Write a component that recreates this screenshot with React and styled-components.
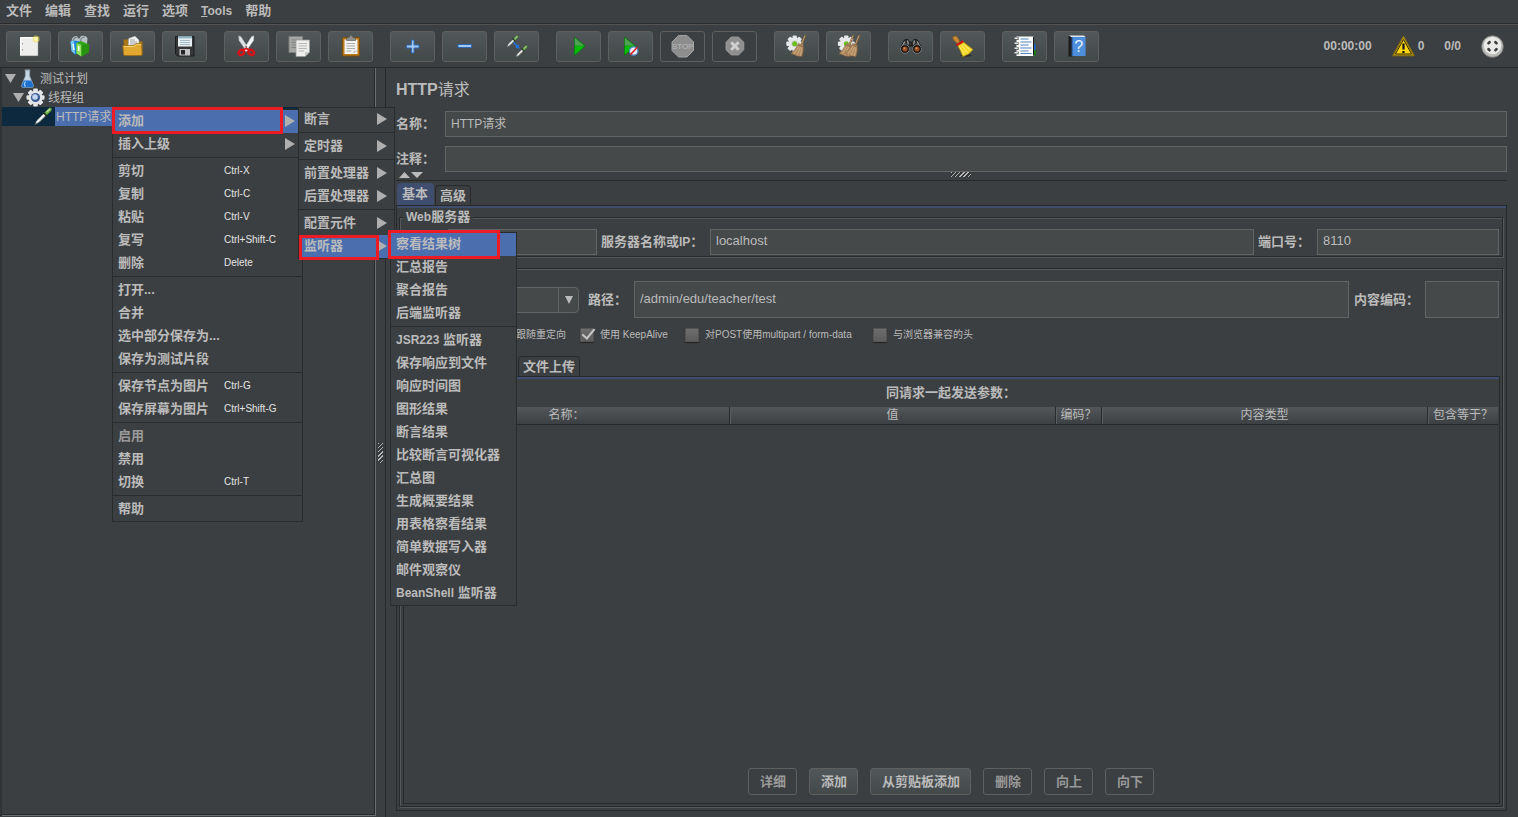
import { useState } from "react";
import { createGlobalStyle, css, styled } from "styled-components";

const Latin = styled.span`
  font-size: 12px;
`;

const LISTENERS = [
  { label: "察看结果树", hot: true, marker: { x: -3, y: -3, w: 112, h: 29 } },
  { label: "汇总报告" },
  { label: "聚合报告" },
  { label: "后端监听器" },
  null,
  { label: <><Latin>JSR223</Latin> 监听器</> },
  { label: "保存响应到文件" },
  { label: "响应时间图" },
  { label: "图形结果" },
  { label: "断言结果" },
  { label: "比较断言可视化器" },
  { label: "汇总图" },
  { label: "生成概要结果" },
  { label: "用表格察看结果" },
  { label: "简单数据写入器" },
  { label: "邮件观察仪" },
  { label: <><Latin>BeanShell</Latin> 监听器</> },
];

const ADD_MENU = [
  { label: "断言", arrow: true },
  null,
  { label: "定时器", arrow: true },
  null,
  { label: "前置处理器", arrow: true },
  { label: "后置处理器", arrow: true },
  null,
  { label: "配置元件", arrow: true },
  {
    label: "监听器",
    arrow: true,
    hot: true,
    marker: { x: 0, y: 0, w: 80, h: 25 },
    children: LISTENERS,
    childLeft: 91,
    childWidth: 127,
  },
];

const CONTEXT_MENU = [
  {
    label: "添加",
    arrow: true,
    hot: true,
    marker: { x: -1, y: -3, w: 171, h: 27 },
    children: ADD_MENU,
    childLeft: 185,
    childWidth: 97,
  },
  { label: "插入上级", arrow: true },
  null,
  { label: "剪切", keys: "Ctrl-X" },
  { label: "复制", keys: "Ctrl-C" },
  { label: "粘贴", keys: "Ctrl-V" },
  { label: "复写", keys: "Ctrl+Shift-C" },
  { label: "删除", keys: "Delete" },
  null,
  { label: "打开..." },
  { label: "合并" },
  { label: "选中部分保存为..." },
  { label: "保存为测试片段" },
  null,
  { label: "保存节点为图片", keys: "Ctrl-G" },
  { label: "保存屏幕为图片", keys: "Ctrl+Shift-G" },
  null,
  { label: "启用", disabled: true },
  { label: "禁用" },
  { label: "切换", keys: "Ctrl-T" },
  null,
  { label: "帮助" },
];

function Menu({ items, left, top, width }) {
  return (
    <MenuBox $left={left} $top={top} $width={width}>
      {items.map((item, i) =>
        item ? (
          <MenuRow key={i} $marker={item.marker}>
            <MenuButton type="button" $hot={item.hot} disabled={item.disabled}>
              <MenuLabel $keyed={item.keys}>{item.label}</MenuLabel>
              {item.keys && <Keys>{item.keys}</Keys>}
              {item.arrow && (
                <MenuArrow viewBox="0 0 10 12">
                  <path d="M0 0L10 6L0 12z" fill="#afafaf" />
                </MenuArrow>
              )}
            </MenuButton>
            {item.children && (
              <Menu
                items={item.children}
                left={item.childLeft}
                top={-3}
                width={item.childWidth}
              />
            )}
          </MenuRow>
        ) : (
          <MenuSeparator key={i} />
        ),
      )}
    </MenuBox>
  );
}

function Pipette({ x = 0, y = 0, scale = 1 }) {
  return (
    <g transform={`translate(${x} ${y}) scale(${scale})`}>
      <path d="M1.5 17.5L4 13L11 6L13 8L6 15z" fill="#d5d9d6" stroke="#6f7573" strokeWidth=".7" />
      <path d="M3 15.5L11 7.5" stroke="#fff" strokeWidth="1.4" />
      <path d="M9.5 5L14 9.5" stroke="#1f2a1f" strokeWidth="1.8" />
      <path d="M11.2 5.6L15.4 1.2Q17.6 .2 18.2 2Q18.4 3 17.6 3.8L13.4 8z" fill="#6fae50" stroke="#3f7a2c" strokeWidth=".6" />
      <path d="M13 5L16.5 2" stroke="#c0e8a4" strokeWidth="1.1" />
    </g>
  );
}

function Cog({ cx, cy, r, fill = "#e6e8ea" }) {
  return (
    <g>
      {[0, 45, 90, 135].map((a) => (
        <rect
          key={a}
          x={cx - r * 0.26}
          y={cy - r}
          width={r * 0.52}
          height={r * 2}
          rx="1"
          fill={fill}
          transform={`rotate(${a} ${cx} ${cy})`}
        />
      ))}
      <circle cx={cx} cy={cy} r={r * 0.76} fill={fill} />
    </g>
  );
}

function Broom({ x = 0 }) {
  return (
    <g transform={`translate(${x} 0)`}>
      <path d="M20.2 .5L16.4 10" stroke="#7b5a3a" strokeWidth="2" />
      <path d="M20 .5L16.4 9.5" stroke="#c79c6c" strokeWidth="1" />
      <path d="M13.5 8.5L18.3 10.2Q18.8 16 17 21.5L12.5 21L6 18.6Q10.8 14.5 13.5 8.5z" fill="#b18a60" stroke="#80603f" strokeWidth=".5" />
      <path d="M14.5 10.5L9 19M16 11L12 20.5M17.3 11.5L15.2 21" stroke="#dbbb92" strokeWidth=".6" />
      <path d="M13.2 10.2L18.2 12" stroke="#7d5b38" strokeWidth=".8" />
    </g>
  );
}

const NewIcon = () => (
  <Glyph viewBox="0 0 23 23">
    <path d="M3.5 2.5h17v18h-17z" fill="#eeeeec" stroke="#fff" />
    <path d="M3.5 20.7h17.5V3" fill="none" stroke="#8a8c89" strokeWidth=".6" />
    <path d="M5.5 8v1.5M5.5 14v1.5" stroke="#9a9a9a" />
    <circle cx="19" cy="4" r="3.6" fill="#f4e04c" opacity=".55" />
    <circle cx="19" cy="4" r="2" fill="#fff8b0" />
  </Glyph>
);

const TemplatesIcon = () => (
  <Glyph viewBox="0 0 23 23">
    <path d="M2.5 6Q3 1 8 1L10 4L12 1Q17 0 18.5 3L18 9L8 10z" fill="#b9c0c4" />
    <path d="M4 6Q5 2 9 2M11.5 6Q12 2 16 2" fill="none" stroke="#75808a" strokeWidth="1.2" />
    <path d="M1.5 6.5L5 5.5L11 6.5V18L5.5 19.5L2.5 16z" fill="#1a82d6" />
    <path d="M1.5 6.5L5 5.5L6 19L2.5 16z" fill="#7cc7f5" />
    <path d="M7.5 8L12 6L20 9.5V17L12.5 21.5L7.5 18.5z" fill="#31a317" />
    <path d="M7.5 8L12.5 10V21.5L7.5 18.5z" fill="#8fe25f" />
    <path d="M12.5 10L20 9.5V17L12.5 21.5z" fill="#27920f" />
    <path d="M4 9L5 15M9.8 11v5" stroke="#fff" strokeWidth="1.3" />
  </Glyph>
);

const OpenIcon = () => (
  <Glyph viewBox="0 0 23 23">
    <path d="M2.5 4.5h6l2 2h11v13h-18z" fill="#a97612" />
    <path d="M7.5 3.5L14 1L18 5V13H7z" fill="#f2f2f0" stroke="#8f8f8c" strokeWidth=".6" />
    <path d="M9 5h5M9 7h7M9 9h7" stroke="#8b9095" strokeWidth=".8" />
    <path d="M1.8 10.5H13L15 8.5H20.5L21 19.5Q21 20.5 20 20.5H4Q2.8 20.5 2.6 19.5z" fill="#e0a82e" stroke="#9b6c10" strokeWidth=".7" />
    <path d="M2.8 11.5H13.5L15.5 9.5H19.8" fill="none" stroke="#f7d57e" strokeWidth=".9" />
  </Glyph>
);

const SaveIcon = () => (
  <Glyph viewBox="0 0 23 23">
    <path d="M2.5 1.5h18.5V21H4.5L2.5 19z" fill="#343637" stroke="#1c1d1e" />
    <path d="M5 1.5h14v10H5z" fill="#e8eff3" />
    <path d="M5 1.5h14v2H5z" fill="#8fb8c9" />
    <path d="M7 5.5h10M7 7.5h10M7 9.5h10" stroke="#9fb4c0" strokeWidth=".9" />
    <path d="M6.5 14H17v6.5H6.5z" fill="#bfc1c2" />
    <path d="M8 15h4v4.5H8z" fill="#242526" />
  </Glyph>
);

const CutIcon = () => (
  <Glyph viewBox="0 0 23 23">
    <path d="M3.6 .8L6 1.6L14.5 15L11.5 16.5L4 5.5z" fill="#dfe3e6" stroke="#8f9598" strokeWidth=".5" />
    <path d="M19 .8L16.6 1.6L8.1 15L11 16.5L18.6 5.5z" fill="#f6f7f8" stroke="#9ba0a3" strokeWidth=".5" />
    <circle cx="11.3" cy="12" r=".9" fill="#666" />
    <ellipse cx="6.4" cy="17.4" rx="3" ry="2.3" fill="none" stroke="#dc1015" strokeWidth="2.3" transform="rotate(-35 6.4 17.4)" />
    <ellipse cx="16.2" cy="17.4" rx="3" ry="2.3" fill="none" stroke="#dc1015" strokeWidth="2.3" transform="rotate(35 16.2 17.4)" />
    <path d="M8.4 14.8L11.3 13.4L14.2 14.8" fill="none" stroke="#dc1015" strokeWidth="1.8" />
  </Glyph>
);

const CopyIcon = () => (
  <Glyph viewBox="0 0 23 23">
    <path d="M2 1.5H15.5V17.5H2z" fill="#a5a7a5" stroke="#7e807e" />
    <path d="M4.5 5h8M4.5 7.5h8M4.5 10h6M4.5 12.5h6" stroke="#7f827f" />
    <path d="M9 5H22.5V17L18 21.5H9z" fill="#eeeeec" stroke="#9b9d9a" strokeWidth=".8" />
    <path d="M11.5 8.5h8.5M11.5 11h8.5M11.5 13.5h8.5M11.5 16h5.5" stroke="#b6b8b5" />
    <path d="M18 21.5V17h4.5z" fill="#c9cbc8" />
  </Glyph>
);

const PasteIcon = () => (
  <Glyph viewBox="0 0 23 23">
    <rect x="3.5" y="2.5" width="17" height="18.5" rx="1" fill="#b97a1a" stroke="#7d4f0b" />
    <path d="M5.5 4.5H18.5V19H5.5z" fill="#f3f3f1" />
    <path d="M7.5 8.5h8.5M7.5 11h8.5M7.5 13.5h8.5M7.5 16h5" stroke="#a9aba8" />
    <path d="M14.5 19V15.5H18.5z" fill="#c6c8c5" />
    <path d="M7.5 5.5V3.2L10 2.6Q10.4 .6 12 .6T14 2.6L16.5 3.2V5.5z" fill="#8e908d" stroke="#555753" strokeWidth=".6" />
  </Glyph>
);

const PlusIcon = () => (
  <Glyph viewBox="0 0 23 23">
    <path d="M10.5 5h2.5v5h5v3h-5v5h-2.500v-5h-5v-3h5z" fill="#a4c8f0" stroke="#2c68b4" strokeWidth="1" />
  </Glyph>
);

const MinusIcon = () => (
  <Glyph viewBox="0 0 23 23">
    <path d="M5 9.5h13.5v3H5z" fill="#a4c8f0" stroke="#2c68b4" strokeWidth="1" />
  </Glyph>
);

const ToggleIcon = () => (
  <Glyph viewBox="0 0 23 23">
    <Pipette x={1} y={0} scale={0.68} />
    <Pipette x={10} y={10} scale={0.68} />
    <path d="M8.5 7.5L12.5 11.5" stroke="#1c74e8" strokeWidth="1.4" />
    <path d="M14.5 13.8L10 12.6L13.6 9.2z" fill="#1c74e8" />
  </Glyph>
);

const PlayShape = ({ x }) => (
  <g transform={`translate(${x} 0)`}>
    <path d="M.5 2L11.5 11L.5 20.5z" fill="#12a312" stroke="#0a6d12" strokeWidth=".8" />
    <path d="M.8 3L10 10.5H.8z" fill="#4f9f54" />
    <path d="M.8 11.5H10L.8 19.5z" fill="#08bd08" />
  </g>
);

const StartIcon = () => (
  <Glyph viewBox="0 0 23 23">
    <PlayShape x={7} />
  </Glyph>
);

const StartNoTimersIcon = () => (
  <Glyph viewBox="0 0 23 23">
    <PlayShape x={5} />
    <circle cx="14.7" cy="16" r="4.2" fill="#e8f1fa" stroke="#4f86c6" strokeWidth="1.2" />
    <path d="M11.4 19.6L18.4 12.2" stroke="#e02222" strokeWidth="1.6" />
  </Glyph>
);

const StopIcon = () => (
  <Glyph viewBox="0 0 23 23">
    <path d="M7.5 .5H16L22.5 7V15.5L16 22H7.5L1 15.5V7z" fill="#8d8d8d" stroke="#a3a3a3" />
    <text x="11.8" y="14.3" fontSize="8" textAnchor="middle" fontFamily="Liberation Sans, sans-serif" fill="#b9b9b9">
      STOP
    </text>
  </Glyph>
);

const ShutdownIcon = () => (
  <Glyph viewBox="0 0 23 23">
    <path d="M8.2 2H15.5L20.8 7.3V14.8L15.5 20H8.2L3 14.8V7.3z" fill="#8f8f8f" stroke="#a0a0a0" strokeWidth=".8" />
    <path d="M8.2 7.3L15.6 14.7M15.6 7.3L8.2 14.7" stroke="#cfcfcf" strokeWidth="3" />
  </Glyph>
);

const ClearIcon = () => (
  <Glyph viewBox="0 0 23 23">
    <Cog cx={9.7} cy={8.8} r={8.4} />
    <circle cx="9.7" cy="8.8" r="3.2" fill="#c9cfc4" />
    <circle cx="9.7" cy="8.8" r="2.5" fill="#6bbf1f" />
    <Broom />
  </Glyph>
);

const ClearAllIcon = () => (
  <Glyph viewBox="0 0 23 23">
    <Cog cx={9.3} cy={8.8} r={8.4} />
    <circle cx="9.3" cy="8.8" r="2.5" fill="#6bbf1f" />
    <Broom x={-4} />
    <Broom x={2} />
  </Glyph>
);

const SearchIcon = () => (
  <Glyph viewBox="0 0 23 23">
    <path d="M5 5.5Q6.5 3.6 9 4.5L10.5 7H13.5L15 4.5Q17.5 3.6 19 5.5L22.5 13L14 15V11H10V15L1.5 13z" fill="#2b2b2b" stroke="#0e0e0e" strokeWidth=".7" />
    <path d="M5.8 6.5L3.5 11M8.6 5.5L9.3 9.5M18.2 6.5L20.5 11M15.4 5.5L14.7 9.5" stroke="#a3a6a8" strokeWidth="1.3" />
    <circle cx="6" cy="14" r="4.4" fill="#111" stroke="#8a8a8a" strokeWidth=".8" />
    <circle cx="18" cy="14" r="4.4" fill="#111" stroke="#8a8a8a" strokeWidth=".8" />
    <circle cx="6" cy="14" r="2.6" fill="#9a4f22" />
    <circle cx="18" cy="14" r="2.6" fill="#9a4f22" />
    <circle cx="5.4" cy="13.2" r="1" fill="#d9895a" />
    <circle cx="17.4" cy="13.2" r="1" fill="#d9895a" />
  </Glyph>
);

const ResetSearchIcon = () => (
  <Glyph viewBox="0 0 23 23">
    <ellipse cx="15" cy="20.5" rx="6" ry="1.2" fill="#2c2f30" />
    <path d="M2 2.2Q3.5 .2 6 1.5L9 6.5L6.5 8.5Q1 4.5 2 2.2z" fill="#c98a34" stroke="#85551a" strokeWidth=".7" />
    <path d="M6 9.5L11.5 6.2Q16 10 22 14.5Q18 20 11.8 21.5Q9.5 15 6 9.5z" fill="#f2d626" stroke="#a88a0a" strokeWidth=".7" />
    <path d="M8.5 11.5L13.5 19.5M10.8 10.5L17 18.5M12.5 9.5L19.8 15.5" stroke="#fff27a" strokeWidth="1" />
    <path d="M5.6 10.3L12.2 6.2" stroke="#cc1414" strokeWidth="2.2" />
  </Glyph>
);

const FunctionIcon = () => (
  <Glyph viewBox="0 0 23 23">
    <path d="M20 9h2.6v6H20z" fill="#1d63c4" />
    <path d="M20 15h2.6v5.5H20z" fill="#128a12" />
    <path d="M3.5 1.5h17V21h-17z" fill="#fafafa" />
    <path d="M20.5 2v18.5" stroke="#17181a" />
    <path d="M7.5 4h8M7.5 7h11M7.5 10h8M7.5 13h11M7.5 16h8M7.5 18.5h11" stroke="#5585bf" strokeWidth="1.1" />
    <path d="M3.5 3.5h2M3.5 8.5h2M3.5 13.5h2M3.5 18h2" stroke="#222" strokeWidth="2.6" />
    <path d="M1.5 3.2h3.4M1.5 8.2h3.4M1.5 13.2h3.4M1.5 17.8h3.4" stroke="#e4e4e4" strokeWidth="1.5" />
  </Glyph>
);

const HelpIcon = () => (
  <Glyph viewBox="0 0 23 23">
    <path d="M3.5 1H7.5V21.5H3.5z" fill="#1b1c1e" />
    <path d="M4 .6H19L20.5 2H6z" fill="#dfe3e8" />
    <path d="M6.8 2H20.6V21H6.8z" fill="#4d8fdc" />
    <path d="M7.4 2v19" stroke="#2f68ad" />
    <text x="13.8" y="16.8" fontSize="16" textAnchor="middle" fontFamily="Liberation Sans, sans-serif" fill="#eaf3ff">
      ?
    </text>
  </Glyph>
);

const TOOLBAR = [
  [
    { name: "新建", icon: NewIcon },
    { name: "模板", icon: TemplatesIcon },
    { name: "打开", icon: OpenIcon },
    { name: "保存", icon: SaveIcon },
  ],
  [
    { name: "剪切", icon: CutIcon },
    { name: "复制", icon: CopyIcon },
    { name: "粘贴", icon: PasteIcon },
  ],
  [
    { name: "展开", icon: PlusIcon },
    { name: "折叠", icon: MinusIcon },
    { name: "切换", icon: ToggleIcon },
  ],
  [
    { name: "启动", icon: StartIcon },
    { name: "不停顿启动", icon: StartNoTimersIcon },
    { name: "停止", icon: StopIcon, disabled: true },
    { name: "关闭", icon: ShutdownIcon, disabled: true },
  ],
  [
    { name: "清除", icon: ClearIcon },
    { name: "清除全部", icon: ClearAllIcon },
  ],
  [
    { name: "查找", icon: SearchIcon },
    { name: "重置查找", icon: ResetSearchIcon },
  ],
  [
    { name: "函数助手", icon: FunctionIcon },
    { name: "帮助", icon: HelpIcon },
  ],
];

function Toolbar() {
  return (
    <ToolbarBox>
      {TOOLBAR.map((group, i) => (
        <ToolGroup key={i}>
          {group.map(({ name, icon: Icon, disabled }) => (
            <ToolButton key={name} type="button" aria-label={name} disabled={disabled}>
              <Icon />
            </ToolButton>
          ))}
        </ToolGroup>
      ))}
      <Status>
        <StatusText>00:00:00</StatusText>
        <Warning>
          <Glyph viewBox="0 0 23 23">
            <path d="M11.5 1.5L22 20.5H1z" fill="#f4c90c" stroke="#8b7108" strokeWidth="1.4" strokeLinejoin="round" />
            <path d="M11.5 4.5L19.6 19H3.4z" fill="#fbd50f" stroke="#29230a" strokeWidth="1" />
            <path d="M11.5 8.5v6" stroke="#111" strokeWidth="2.2" />
            <path d="M11.5 16v2" stroke="#111" strokeWidth="2.2" />
          </Glyph>
          <StatusText>0</StatusText>
        </Warning>
        <StatusText>0/0</StatusText>
        <Glyph viewBox="0 0 23 23">
          <circle cx="11.5" cy="11.5" r="10.8" fill="#b9b9b7" stroke="#777" strokeWidth=".8" />
          <circle cx="11.5" cy="10.5" r="8.8" fill="#e9e9e7" />
          {[45, 135, 225, 315].map((a) => (
            <rect key={a} x="9.5" y="5" width="4" height="2.6" rx="1" fill="#3c3f41" transform={`rotate(${a} 11.5 11.2)`} />
          ))}
        </Glyph>
      </Status>
    </ToolbarBox>
  );
}

function Tree({ onContextMenu }) {
  return (
    <TreeBox onContextMenu={onContextMenu}>
      <TreeRow $depth={0}>
        <Twisty viewBox="0 0 11 9">
          <path d="M0 0H11L5.5 9z" fill="#afafaf" />
        </Twisty>
        <TreeIcon viewBox="0 0 20 19">
          <path d="M7.8 1h4.4v6L16 16.5Q16.3 18.5 14.5 18.5H5.5Q3.7 18.5 4 16.5L7.8 7z" fill="#c6d6e2" stroke="#7f98ab" strokeWidth=".6" />
          <path d="M6.5 11.5H13.6L15.7 16.5Q15.9 18.2 14.5 18.2H5.5Q4.1 18.2 4.3 16.5z" fill="#1d6fd0" />
          <path d="M8 12.5Q6 16 8 17.5" fill="none" stroke="#9fd0ff" strokeWidth="1.2" />
          <path d="M7.2 1.2h5.6" stroke="#9aa5ad" strokeWidth="1.2" />
        </TreeIcon>
        <TreeLabel>测试计划</TreeLabel>
      </TreeRow>
      <TreeRow $depth={1}>
        <Twisty viewBox="0 0 11 9">
          <path d="M0 0H11L5.5 9z" fill="#afafaf" />
        </Twisty>
        <TreeIcon viewBox="0 0 20 19">
          <Cog cx={10} cy={9.5} r={9} fill="#e3e5e8" />
          <circle cx="10" cy="9.5" r="4.6" fill="#3c5c96" />
          <circle cx="9.5" cy="9" r="2.8" fill="#c4d6ef" />
        </TreeIcon>
        <TreeLabel>线程组</TreeLabel>
      </TreeRow>
      <TreeRow $depth={2} $selected>
        <Twisty viewBox="0 0 11 9" />
        <TreeIcon viewBox="0 0 20 19">
          <Pipette />
        </TreeIcon>
        <TreeLabel $selected>HTTP请求</TreeLabel>
      </TreeRow>
    </TreeBox>
  );
}

function ParameterTable() {
  return (
    <ParamPanel>
      <ParamTitle>同请求一起发送参数：</ParamTitle>
      <Table>
        <colgroup>
          <col />
          <col />
          <Col $width={46} />
          <col />
          <Col $width={70} />
        </colgroup>
        <thead>
          <tr>
            <Th>名称：</Th>
            <Th>值</Th>
            <Th>编码？</Th>
            <Th>内容类型</Th>
            <Th>包含等于？</Th>
          </tr>
        </thead>
        <tbody />
      </Table>
      <ButtonRow>
        <PushButton type="button" disabled>详细</PushButton>
        <PushButton type="button">添加</PushButton>
        <PushButton type="button">从剪贴板添加</PushButton>
        <PushButton type="button" disabled>删除</PushButton>
        <PushButton type="button" disabled>向上</PushButton>
        <PushButton type="button" disabled>向下</PushButton>
      </ButtonRow>
    </ParamPanel>
  );
}

function RequestEditor() {
  return (
    <Editor>
      <Title>
        HTTP<span>请求</span>
      </Title>
      <NameRow>
        <Label htmlFor="name">名称：</Label>
        <Input id="name" defaultValue="HTTP请求" $small />
      </NameRow>
      <NameRow>
        <Label htmlFor="comment">注释：</Label>
        <Input id="comment" />
      </NameRow>
      <HorizontalSplit>
        <SplitArrows viewBox="0 0 24 6">
          <path d="M0 6L5.5 0L11 6zM12 0H24L18 6z" fill="#bbbbbb" />
        </SplitArrows>
        <Grip $w={20} $h={5} />
      </HorizontalSplit>
      <Tabs>
        <Tab type="button" $active>基本</Tab>
        <Tab type="button">高级</Tab>
      </Tabs>
      <TabPanel>
        <Group>
          <legend><Latin>Web</Latin>服务器</legend>
          <FieldRow>
            <ShortInput aria-label="协议" />
            <Label htmlFor="host" $w={113}>服务器名称或<Latin>IP</Latin>：</Label>
            <Input id="host" defaultValue="localhost" />
            <Label htmlFor="port" $w={63}>端口号：</Label>
            <PortInput id="port" defaultValue="8110" />
          </FieldRow>
        </Group>
        <RequestGroup>
          <PathRow>
            <Combo>
              <select aria-label="方法" />
              <svg viewBox="0 0 8 8" width="8" height="8">
                <path d="M0 0H8L4 8z" fill="#bbbbbb" />
              </svg>
            </Combo>
            <Label htmlFor="path" $w={55} $pad={9}>路径：</Label>
            <Input id="path" defaultValue="/admin/edu/teacher/test" $tall />
            <Label htmlFor="encoding" $w={76} $pad={5}>内容编码：</Label>
            <EncodingInput id="encoding" $tall />
          </PathRow>
          <Checks>
            <Check><input type="checkbox" />跟随重定向</Check>
            <Check><input type="checkbox" defaultChecked />使用 KeepAlive</Check>
            <Check><input type="checkbox" />对POST使用multipart / form-data</Check>
            <Check><input type="checkbox" />与浏览器兼容的头</Check>
          </Checks>
          <Tabs $inner>
            <Tab type="button">文件上传</Tab>
          </Tabs>
          <ParameterTable />
        </RequestGroup>
      </TabPanel>
    </Editor>
  );
}

function App() {
  const [contextMenu, setContextMenu] = useState({
    visible: true,
    x: 112,
    y: 109,
  });
  const handleContextMenu = (event) => {
    event.preventDefault();
    setContextMenu({ visible: true, x: event.clientX, y: event.clientY });
  };

  return (
    <Window>
      <GlobalStyle />
      <MenuBar>
        <MenuBarItem type="button">文件</MenuBarItem>
        <MenuBarItem type="button">编辑</MenuBarItem>
        <MenuBarItem type="button">查找</MenuBarItem>
        <MenuBarItem type="button">运行</MenuBarItem>
        <MenuBarItem type="button">选项</MenuBarItem>
        <MenuBarItem type="button">
          <Latin><u>T</u>ools</Latin>
        </MenuBarItem>
        <MenuBarItem type="button">帮助</MenuBarItem>
      </MenuBar>
      <Toolbar />
      <Main>
        <Tree onContextMenu={handleContextMenu} />
        <VerticalSplit>
          <Grip $w={5} $h={20} />
        </VerticalSplit>
        <RequestEditor />
      </Main>
      {contextMenu.visible && (
        <Menu items={CONTEXT_MENU} left={contextMenu.x} top={contextMenu.y} width={191} />
      )}
    </Window>
  );
}

const GlobalStyle = createGlobalStyle`
  *, *::before, *::after {
    box-sizing: border-box;
  }
  body {
    margin: 0;
    background-color: #3c3f41;
    color: #bbbbbb;
    font: 12px/16px "Liberation Sans", "Noto Sans CJK SC", sans-serif;
  }
  button, input, select {
    margin: 0;
    padding: 0;
    border: 0;
    background: none;
    color: inherit;
    font: inherit;
  }
`;

const Window = styled.div`
  position: relative;
  display: flex;
  flex-direction: column;
  min-height: 100vh;
  overflow: hidden;
`;

const MenuBar = styled.nav`
  display: flex;
  gap: 13px;
  height: 24px;
  padding: 0 6px 1px;
  border-bottom: 1px solid #2a2b2c;
`;
const MenuBarItem = styled.button`
  font-size: 13px;
  font-weight: 700;
  line-height: 20px;
`;

const ToolbarBox = styled.div`
  display: flex;
  align-items: center;
  gap: 17px;
  height: 44px;
  padding: 0 14px 0 6px;
  border-top: 1px solid #555351;
  border-bottom: 1px solid #28292b;
`;
const ToolGroup = styled.div`
  display: flex;
  gap: 7px;
`;
const ToolButton = styled.button`
  display: flex;
  align-items: center;
  justify-content: center;
  width: 45px;
  height: 31px;
  border: 1px solid #5e6060;
  border-radius: 3px;
  background: linear-gradient(#52585a, #434849);

  &:disabled {
    background: none;
  }
`;
const Glyph = styled.svg`
  width: 23px;
  height: 23px;
  flex-shrink: 0;
`;
const Status = styled.div`
  display: flex;
  align-items: center;
  gap: 20px;
  margin-left: auto;
`;
const StatusText = styled.span`
  font-weight: 700;
`;
const Warning = styled.div`
  display: flex;
  align-items: center;
  gap: 3px;
`;

const Main = styled.main`
  display: flex;
  flex: 1;
`;
const TreeBox = styled.aside`
  width: 374px;
  flex-shrink: 0;
  margin: 0 0 1px 2px;
  padding-top: 1px;
  border-right: 1px solid #6a6c6d;
  border-bottom: 1px solid #6a6c6d;
  box-shadow: inset -1px -1px 0 #28292b, -2px 0 0 #303335;
`;
const TreeRow = styled.div`
  display: flex;
  align-items: center;
  gap: 1px;
  height: 19px;
  margin-right: 1px;
  padding-left: ${({ $depth }) => 3 + $depth * 8}px;
  background-color: ${({ $selected }) => ($selected ? "#0d293e" : "transparent")};
`;
const Twisty = styled.svg`
  width: 11px;
  height: 9px;
`;
const TreeIcon = styled.svg`
  width: 21px;
  height: 19px;
`;
const TreeLabel = styled.span`
  padding: 1px 1px 0;
  line-height: 18px;
  background-color: ${({ $selected }) => ($selected ? "#4b6eaf" : "transparent")};
`;

const VerticalSplit = styled.div`
  display: flex;
  align-items: center;
  justify-content: center;
  width: 10px;
  flex-shrink: 0;
  padding-top: 20px;
  border-right: 1px solid #28292b;
`;
const Grip = styled.div`
  width: ${({ $w }) => $w}px;
  height: ${({ $h }) => $h}px;
  background: repeating-linear-gradient(135deg, #b8b8b8 0 1px, #35383a 1px 3px);
`;

const Editor = styled.section`
  display: flex;
  flex: 1;
  flex-direction: column;
  min-width: 0;
  padding: 10px 11px 6px 10px;
`;
const Title = styled.h1`
  margin: 0 0 9px;
  font-size: 16px;
  font-weight: 700;
  line-height: 24px;

  span {
    font-weight: 400;
  }
`;
const NameRow = styled.div`
  display: grid;
  grid-template-columns: 49px 1fr;
  align-items: center;

  & + & {
    margin-top: 9px;
  }
`;
const Label = styled.label`
  width: ${({ $w }) => ($w ? `${$w}px` : "auto")};
  padding-left: ${({ $w, $pad = 4 }) => ($w ? $pad : 0)}px;
  flex-shrink: 0;
  font-size: 13px;
  font-weight: 700;
  white-space: nowrap;
`;
const Input = styled.input`
  flex: 1;
  min-width: 0;
  height: ${({ $tall }) => ($tall ? 37 : 26)}px;
  padding: 0 5px 3px;
  border: 1px solid #646464;
  background-color: #45494a;
  font-size: ${({ $small }) => ($small ? 12 : 13)}px;
`;
const ShortInput = styled(Input)`
  flex: 0 0 149px;
`;
const PortInput = styled(Input)`
  flex: 0 0 182px;
`;
const EncodingInput = styled(Input)`
  flex: 0 0 74px;
`;

const HorizontalSplit = styled.div`
  display: grid;
  grid-template-columns: auto 1fr;
  justify-items: center;
  height: 9px;
  padding: 0 8px 0 3px;
  border-bottom: 1px solid #28292b;
`;
const SplitArrows = styled.svg`
  width: 24px;
  height: 6px;
`;

const Tabs = styled.div`
  display: flex;
  align-items: flex-end;
  gap: 1px;
  height: ${({ $inner }) => ($inner ? 20 : 24)}px;
  padding-left: ${({ $inner }) => ($inner ? 115 : 1)}px;
`;
const Tab = styled.button`
  height: 20px;
  padding: 0 4px;
  border: 1px solid #28292b;
  border-bottom: 0;
  border-radius: 4px 4px 0 0;
  font-size: 13px;
  font-weight: 700;
  line-height: 20px;

  ${({ $active }) =>
    $active &&
    css`
      height: 22px;
      padding: 0 5px 1px 4px;
      border-color: #3f4d6e;
      background-color: #3f4d6e;
    `}
`;
const TabPanel = styled.div`
  display: flex;
  flex: 1;
  flex-direction: column;
  padding: 3px 3px 3px 2px;
  border: 1px solid #28292b;
  box-shadow: inset 0 2px 0 #3f4d6e;
`;

const Group = styled.fieldset`
  min-width: 0;
  margin: 0;
  padding: 4px 3px 1px 48px;
  border: 1px solid #28292b;
  box-shadow: 1px 1px 0 #55585a, inset 1px 1px 0 #55585a;

  legend {
    margin-left: -45px;
    padding: 0 3px;
    background-color: #3c3f41;
    font-size: 13px;
    font-weight: 700;
    line-height: 16px;
  }
`;
const FieldRow = styled.div`
  display: flex;
  align-items: center;
`;
const RequestGroup = styled.div`
  display: flex;
  flex: 1;
  flex-direction: column;
  margin-top: 11px;
  padding: 12px 2px 2px 3px;
  border: 1px solid #28292b;
  box-shadow: 1px 1px 0 #55585a, inset 1px 1px 0 #55585a;
`;
const PathRow = styled(FieldRow)`
  padding: 0 1px 0 45px;
`;
const Combo = styled.div`
  display: flex;
  align-items: center;
  width: 131px;
  height: 26px;
  flex-shrink: 0;
  padding-right: 5px;
  border: 1px solid #646464;
  border-radius: 4px;
  background-color: #45494a;

  select {
    flex: 1;
    height: 24px;
    margin-right: 6px;
    border-right: 1px solid #646464;
    appearance: none;
  }
`;
const Checks = styled.div`
  display: grid;
  grid-template-columns: 84px 105px 188px auto;
  align-items: center;
  height: 34px;
  margin-bottom: 4px;
  padding-left: 93px;
`;
const Check = styled.label`
  display: flex;
  align-items: center;
  gap: 6px;
  font-size: 10px;
  white-space: nowrap;

  input {
    position: relative;
    width: 14px;
    height: 14px;
    border: 1px solid #555555;
    border-radius: 1px;
    background: linear-gradient(#6e6e6e, #5c5c5c);
    box-shadow: 0 1px 1px #222;
    appearance: none;
  }
  input:checked::after {
    content: "";
    position: absolute;
    left: 4px;
    top: -3px;
    width: 7px;
    height: 13px;
    border: solid #c8c8c8;
    border-width: 0 2px 2px 0;
    transform: rotate(40deg);
  }
`;

const ParamPanel = styled.div`
  display: flex;
  flex: 1;
  flex-direction: column;
  padding: 2px 1px 8px 0;
  border: 1px solid #28292b;
  box-shadow: inset 0 2px 0 #3f4d6e;
`;
const ParamTitle = styled.h2`
  margin: 0;
  font-size: 13px;
  font-weight: 700;
  line-height: 28px;
  text-align: center;
`;
const Table = styled.table`
  width: 100%;
  table-layout: fixed;
  border-collapse: separate;
  border-spacing: 0;
`;
const Col = styled.col`
  width: ${({ $width }) => $width}px;
`;
const Th = styled.th`
  height: 18px;
  padding: 0;
  border-right: 1px solid #28292b;
  border-bottom: 1px solid #28292b;
  background: linear-gradient(#53575a, #3d4042);
  font-weight: 400;
  line-height: 17px;
  white-space: nowrap;

  & + & {
    box-shadow: inset 1px 0 0 #5a5d5f;
  }
  &:last-child {
    border-right: 0;
  }
`;
const ButtonRow = styled.div`
  display: flex;
  justify-content: center;
  gap: 12px;
  margin-top: auto;
`;
const PushButton = styled.button`
  height: 27px;
  padding: 0 10px 0 11px;
  border: 1px solid #5e6060;
  border-radius: 3px;
  background: linear-gradient(#52585a, #434849);
  font-size: 13px;
  font-weight: 700;

  &:disabled {
    background: none;
    color: #999999;
  }
`;

const MenuBox = styled.ul`
  position: absolute;
  z-index: 10;
  left: ${({ $left }) => $left}px;
  top: ${({ $top }) => $top}px;
  width: ${({ $width }) => $width}px;
  margin: 0;
  padding: 0;
  border: 1px solid #2a2b2c;
  background-color: #3c3f41;
  list-style: none;
`;
const MenuRow = styled.li`
  position: relative;

  ${({ $marker }) =>
    $marker &&
    css`
      &::after {
        content: "";
        position: absolute;
        z-index: 5;
        left: ${$marker.x}px;
        top: ${$marker.y}px;
        width: ${$marker.w}px;
        height: ${$marker.h}px;
        border: 3px solid #ed1c24;
        pointer-events: none;
      }
    `}
`;
const MenuButton = styled.button`
  display: flex;
  align-items: center;
  width: 100%;
  height: 23px;
  padding: 0 7px 2px 5px;
  background-color: ${({ $hot }) => ($hot ? "#4b6eaf" : "transparent")};
  font-size: 13px;
  font-weight: 700;
  text-align: left;
  white-space: nowrap;

  &:disabled {
    color: #999999;
  }
`;
const MenuLabel = styled.span`
  min-width: ${({ $keyed }) => ($keyed ? 106 : 0)}px;
`;
const Keys = styled.span`
  color: #e4e4e4;
  font-size: 10px;
  font-weight: 400;
`;
const MenuArrow = styled.svg`
  width: 10px;
  height: 12px;
  margin-left: auto;
`;
const MenuSeparator = styled.li`
  height: 4px;
  padding-top: 1px;

  &::before {
    content: "";
    display: block;
    height: 1px;
    background-color: #2a2b2c;
  }
`;

export default App;
